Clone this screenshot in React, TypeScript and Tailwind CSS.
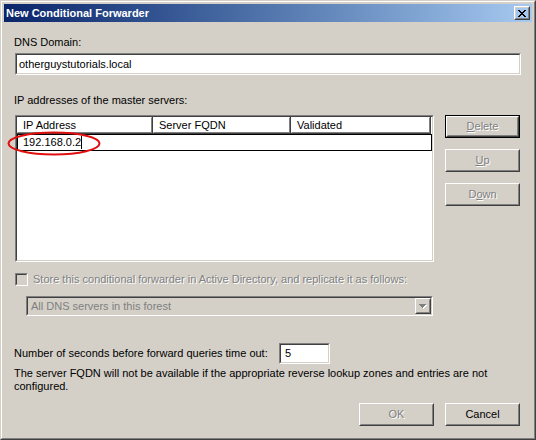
import React from "react";

const Sunken = ({ className, inner, children }: { className?: string; inner?: string; children?: React.ReactNode }) => (
  <div className={`border border-t-[#808080] border-l-[#808080] border-r-white border-b-white ${className ?? ""}`}>
    <div className={`h-full w-full border border-t-[#404040] border-l-[#404040] border-r-[#d4d0c8] border-b-[#d4d0c8] ${inner ?? ""}`}>
      {children}
    </div>
  </div>
);

const Raised = ({ className, inner, children }: { className?: string; inner?: string; children?: React.ReactNode }) => (
  <div className={`border border-t-white border-l-white border-r-[#404040] border-b-[#404040] ${className ?? ""}`}>
    <div className={`h-full w-full border border-t-[#d4d0c8] border-l-[#d4d0c8] border-r-[#808080] border-b-[#808080] ${inner ?? ""}`}>
      {children}
    </div>
  </div>
);

const Btn = ({ children, disabled, def }: { children: React.ReactNode; disabled?: boolean; def?: boolean }) => (
  <div className={def ? "w-[75px] h-[23px] border border-black" : "w-[75px] h-[23px]"}>
    <Raised className="h-full" inner="flex items-center justify-center">
      <span className={disabled ? "text-[#808080] [text-shadow:1px_1px_0_#ffffff]" : "text-black"}>{children}</span>
    </Raised>
  </div>
);

const HeaderCell = ({ w, children }: { w: string; children: React.ReactNode }) => (
  <div className={`${w} h-full border-r border-b border-r-[#404040] border-b-[#404040]`}>
    <div className="h-full border border-t-white border-l-white border-r-[#808080] border-b-[#808080] pl-[5px] flex items-center">
      {children}
    </div>
  </div>
);

export default function App() {
  return (
    <div className="w-[536px] h-[440px] bg-[#d4d0c8] border border-t-[#d4d0c8] border-l-[#d4d0c8] border-r-[#404040] border-b-[#404040] font-['Liberation_Sans',Arial,sans-serif] text-[11px] leading-[13px] text-black">
      <div className="h-full border border-t-white border-l-white border-r-[#808080] border-b-[#808080] p-[2px] flex flex-col">
        {/* Title bar */}
        <div className="h-[18px] bg-gradient-to-r from-[#0a246a] to-[#a6caf0] flex items-center pl-[2px] pr-[2px]">
          <span className="text-white font-bold text-[11px]">New Conditional Forwarder</span>
          <div className="ml-auto w-[16px] h-[14px]">
            <Raised className="h-full" inner="flex items-center justify-center">
              <svg width="8" height="7" viewBox="0 0 8 7" shapeRendering="crispEdges">
                <path d="M0 0h2v1h-2zM6 0h2v1h-2zM1 1h2v1h-2zM5 1h2v1h-2zM2 2h4v1h-4zM3 3h2v1h-2zM2 4h4v1h-4zM1 5h2v1h-2zM5 5h2v1h-2zM0 6h2v1h-2zM6 6h2v1h-2z" fill="#000" />
              </svg>
            </Raised>
          </div>
        </div>

        {/* Content */}
        <div className="relative flex-1 flex flex-col pl-[10px] pr-[12px]">
          <div className="mt-[14px] h-[13px]">DNS Domain:</div>
          <Sunken className="mt-[4px] ml-[1px] w-[506px] h-[22px]" inner="bg-white flex items-center pl-[2px]">
            <span>otherguystutorials.local</span>
          </Sunken>

          <div className="mt-[19px] h-[13px]">IP addresses of the master servers:</div>

          <div className="mt-[8px] flex">
            <Sunken className="ml-[1px] w-[420px] h-[147px]" inner="bg-white flex flex-col">
              <div className="h-[17px] flex">
                <HeaderCell w="w-[136px]">IP Address</HeaderCell>
                <HeaderCell w="w-[138px]">Server FQDN</HeaderCell>
                <HeaderCell w="w-[140px]">Validated</HeaderCell>
              </div>
              <div className="w-[415px] h-[17px] border border-black bg-white flex items-center pl-[5px]">
                <span>192.168.0.2</span>
                <span className="w-px h-[13px] bg-black"></span>
              </div>
            </Sunken>
            <div className="ml-[11px] flex flex-col gap-[11px]">
              <Btn disabled def>
                <u>D</u>elete
              </Btn>
              <Btn disabled>
                <u>U</u>p
              </Btn>
              <Btn disabled>
                D<u>o</u>wn
              </Btn>
            </div>
          </div>

          <div className="mt-[11px] flex items-center h-[13px]">
            <Sunken className="ml-[1px] w-[13px] h-[13px]" inner="bg-[#d4d0c8]" />
            <span className="ml-[5px] text-[#808080] [text-shadow:1px_1px_0_#ffffff]">
              Store this conditional forwarder in Active Directory, and replicate it as follows:
            </span>
          </div>

          <Sunken className="mt-[10px] ml-[12px] w-[407px] h-[20px]" inner="bg-[#d4d0c8] flex items-center">
            <span className="pl-[3px] text-[#808080]">All DNS servers in this forest</span>
            <Raised className="ml-auto w-[16px] h-full" inner="flex items-center justify-center">
              <svg width="8" height="5" viewBox="0 0 8 5" shapeRendering="crispEdges">
                <path d="M1 1h7v1h-7zM2 2h5v1h-5zM3 3h3v1h-3zM4 4h1v1h-1z" fill="#ffffff" />
                <path d="M0 0h7v1h-7zM1 1h5v1h-5zM2 2h3v1h-3zM3 3h1v1h-1z" fill="#808080" />
              </svg>
            </Raised>
          </Sunken>

          <div className="mt-[27px] flex items-center">
            <span className="w-[265px]">Number of seconds before forward queries time out:</span>
            <Sunken className="w-[51px] h-[21px]" inner="bg-white flex items-center pl-[4px]">
              <span>5</span>
            </Sunken>
          </div>

          <div className="mt-[3px]">
            The server FQDN will not be available if the appropriate reverse lookup zones and entries are not
            <br />
            configured.
          </div>

          <div className="mt-[10px] flex justify-end gap-[11px]">
            <Btn disabled>OK</Btn>
            <Btn>Cancel</Btn>
          </div>

          {/* Red annotation ellipse */}
          <svg className="absolute left-[3px] top-[109px]" width="94" height="25" viewBox="0 0 94 25">
            <ellipse cx="47" cy="12.5" rx="45.5" ry="11" fill="none" stroke="#e01010" strokeWidth="2" />
          </svg>
        </div>
      </div>
    </div>
  );
}
